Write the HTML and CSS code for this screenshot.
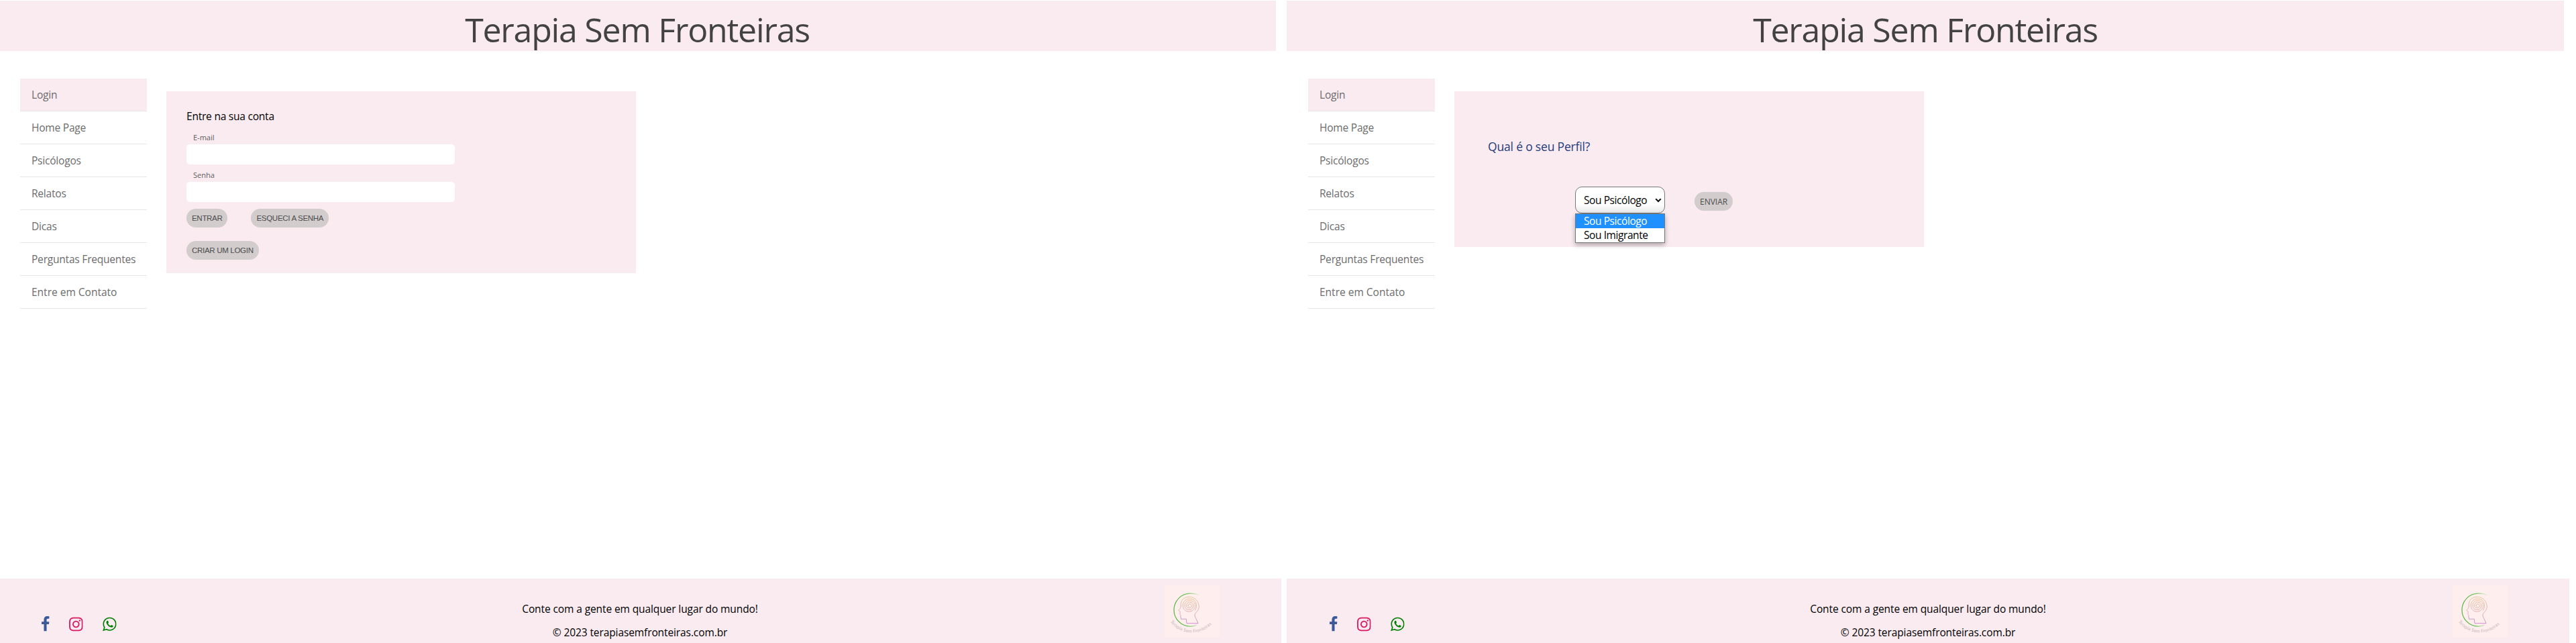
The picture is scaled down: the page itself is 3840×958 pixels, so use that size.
FILE: index.html
```html
<!DOCTYPE html>
<html lang="pt-BR">
<head>
<meta charset="utf-8">
<title>Terapia Sem Fronteiras</title>
<link rel="stylesheet" href="styles.css">
</head>
<body>
<svg class="defs" width="0" height="0" aria-hidden="true">
  <defs>
    <linearGradient id="ring" x1="0" y1="0" x2="1" y2="0">
      <stop offset="0" stop-color="#5cb848"/><stop offset=".6" stop-color="#7cc968"/><stop offset="1" stop-color="#9fd68c" stop-opacity=".1"/>
    </linearGradient>
    <linearGradient id="skin" x1="0" y1="17" x2="0" y2="57" gradientUnits="userSpaceOnUse">
      <stop offset="0" stop-color="#e2b36e"/><stop offset=".5" stop-color="#cf9f98"/><stop offset="1" stop-color="#b765c2"/>
    </linearGradient>
    <path id="curve" d="M8.500 54.500A40.400 40.400 0 0 0 73 54.500"/>
    <symbol id="fb" viewBox="479 0 864 1792"><path d="M1343 12v264h-157q-86 0-116 36t-30 108v189h293l-39 296h-254v759h-306v-759h-255v-296h255v-218q0-186 104-288.500t277-102.500q147 0 228 12z"/></symbol>
    <symbol id="ig" viewBox="128 0 1536 1792"><path d="M1152 896q0-106-75-181t-181-75-181 75-75 181 75 181 181 75 181-75 75-181zm138 0q0 164-115 279t-279 115-279-115-115-279 115-279 279-115 279 115 115 279zm108-410q0 38-27 65t-65 27-65-27-27-65 27-65 65-27 65 27 27 65zm-502-220q-7 0-76.5-.5t-105.5 0-96.5 3-103 10-71.5 18.5q-50 20-88 58t-58 88q-11 29-18.5 71.5t-10 103-3 96.5 0 105.5.5 76.5-.5 76.5 0 105.5 3 96.5 10 103 18.5 71.5q20 50 58 88t88 58q29 11 71.5 18.5t103 10 96.5 3 105.5 0 76.5-.5 76.5.5 105.5 0 96.5-3 103-10 71.5-18.5q50-20 88-58t58-88q11-29 18.5-71.5t10-103 3-96.5 0-105.5-.5-76.5.5-76.5 0-105.5-3-96.5-10-103-18.5-71.5q-20-50-58-88t-88-58q-29-11-71.5-18.5t-103-10-96.5-3-105.5 0-76.5.5zm768 630q0 229-5 317-10 208-124 322t-322 124q-88 5-317 5t-317-5q-208-10-322-124t-124-322q-5-88-5-317t5-317q10-208 124-322t322-124q88-5 317-5t317 5q208 10 322 124t124 322q5 88 5 317z"/></symbol>
    <symbol id="wa" viewBox="128 0 1536 1792"><path d="M1113 974q13 0 97.500 44t89.500 53q2 5 2 15 0 33-17 76-16 39-71 65.500t-102 26.500q-57 0-190-62-98-45-170-118t-148-185q-72-107-71-194v-8q3-91 74-158 24-22 52-22 6 0 18 1.500t19 1.500q19 0 26.500 6.500t15.500 27.500q8 20 33 88t25 75q0 21-34.500 57.500t-34.500 46.500q0 7 5 15 34 73 102 137 56 53 151 101 12 7 22 7 15 0 54-48.500t52-48.500zm-203 530q127 0 243.500-50t200.500-134 134-200.500 50-243.500-50-243.500-134-200.500-200.500-134-243.500-50-243.500 50-200.500 134-134 200.500-50 243.500q0 203 120 368l-79 233 242-77q158 103 345 103zm0-1382q153 0 292.500 60t240.500 161 161 240.500 60 292.500-60 292.500-161 240.500-240.500 161-292.500 60q-195 0-365-94l-417 134 136-405q-108-178-108-389 0-153 60-292.500t161-240.500 240.500-161 292.500-60z"/></symbol>
    <symbol id="logo" viewBox="0 0 82 78">
      <path d="M51.700 14.700C47 12.500 43 12.200 38.500 12.200A24.500 24.500 0 0 0 38.500 61.200C42 61.200 45 60.500 47.700 59.200" fill="none" stroke="url(#ring)" stroke-width="1.300"/>
      <g fill="none" stroke="url(#skin)" stroke-width=".7">
        <path d="M45 37.500C49.500 32.500 48.500 20.500 37.500 20.200C31.500 20 27.300 24.500 27.300 30C27.300 35.500 31.500 39.300 36.500 39.300C41.500 39.300 45.500 35 45.500 30C45.500 25.500 41.500 22.700 37.300 22.700C33 22.700 30 26 30 30C30 33.800 33 36.600 36.700 36.600C40.300 36.600 42.800 33.500 42.800 30.200C42.800 27.200 40.300 25.200 37.500 25.200C34.700 25.200 32.700 27.500 32.700 30C32.700 32.300 34.500 33.900 36.700 33.900C38.800 33.900 40.200 32.200 40.200 30.400C40.200 28.800 38.900 27.800 37.500 27.800C36.200 27.800 35.300 28.800 35.300 30C35.300 30.900 36 31.500 37 31.400"/>
        <path d="M24.300 31.500V28C24.500 21 30 17.300 36.500 17.300C45 17.300 51.300 24 51.300 32C51.300 38.500 45 40.500 45 44.500C45 48 48 51 50 56.700H33L32.300 50.300H24.700L23.700 46.500L24 44.500L22.700 42.500L23.400 39.500L20.700 37.500C22.500 35.500 24.300 34 24.300 31"/>
      </g>
    </symbol>
  </defs>
</svg>

<div class="page">
  <header class="banner"><h1>Terapia Sem Fronteiras</h1></header>
  <main class="content">
    <nav class="menu">
      <a class="active">Login</a><a>Home Page</a><a>Psicólogos</a><a>Relatos</a><a>Dicas</a><a>Perguntas Frequentes</a><a>Entre em Contato</a>
    </nav>
    <form class="card login">
      <h2>Entre na sua conta</h2>
      <label>E-mail</label><input type="text">
      <label>Senha</label><input type="password">
      <div class="actions">
        <button type="button">ENTRAR</button><button type="button">ESQUECI A SENHA</button>
      </div>
      <button type="button">CRIAR UM LOGIN</button>
    </form>
  </main>
  <footer class="footer">
    <div class="social">
      <svg class="fb"><use href="#fb"/></svg><svg class="ig"><use href="#ig"/></svg><svg class="wa"><use href="#wa"/></svg>
    </div>
    <div class="legal"><p>Conte com a gente em qualquer lugar do mundo!</p><p>© 2023 terapiasemfronteiras.com.br</p></div>
    <svg class="logo" viewBox="0 0 82 78">
      <use href="#logo" width="82" height="78"/>
      <text class="motto"><textPath href="#curve">Terapia Sem Fronteiras</textPath></text>
    </svg>
  </footer>
</div>

<div class="page">
  <header class="banner"><h1>Terapia Sem Fronteiras</h1></header>
  <main class="content">
    <nav class="menu">
      <a class="active">Login</a><a>Home Page</a><a>Psicólogos</a><a>Relatos</a><a>Dicas</a><a>Perguntas Frequentes</a><a>Entre em Contato</a>
    </nav>
    <form class="card profile">
      <h2>Qual é o seu Perfil?</h2>
      <div class="choice">
        <div class="select">
          <span>Sou Psicólogo</span>
          <svg class="chevron" viewBox="0 0 10 7"><path d="M1.200 1.200L5 5L8.800 1.200"/></svg>
          <ul class="options"><li class="selected">Sou Psicólogo</li><li>Sou Imigrante</li></ul>
        </div>
        <button type="button" class="send">ENVIAR</button>
      </div>
    </form>
  </main>
  <footer class="footer">
    <div class="social">
      <svg class="fb"><use href="#fb"/></svg><svg class="ig"><use href="#ig"/></svg><svg class="wa"><use href="#wa"/></svg>
    </div>
    <div class="legal"><p>Conte com a gente em qualquer lugar do mundo!</p><p>© 2023 terapiasemfronteiras.com.br</p></div>
    <svg class="logo" viewBox="0 0 82 78">
      <use href="#logo" width="82" height="78"/>
      <text class="motto"><textPath href="#curve">Terapia Sem Fronteiras</textPath></text>
    </svg>
  </footer>
</div>
</body>
</html>
```
FILE: styles.css
```css
* { box-sizing: border-box; }
body {
  margin: 0;
  display: grid;
  grid-template-columns: 1920px 1920px;
  height: 958px;
  overflow: hidden;
  background: #fff;
  font-family: "Open Sans", "Noto Sans", sans-serif;
  font-size: 15.5px;
  color: #000;
}
.defs { position: absolute; }
h1, h2, p, ul { margin: 0; padding: 0; font-weight: 400; }

.page {
  display: flex;
  flex-direction: column;
  height: 958px;
  padding-top: 1px;
}
.banner {
  width: 1904px;
  height: 75px;
  margin-left: -2px;
  padding-top: 10px;
  background: #faebf0;
  text-align: center;
}
.banner h1 {
  font-size: 50px;
  line-height: 66px;
  letter-spacing: -1.2px;
  color: #424242;
}

.content {
  flex: 1;
  display: flex;
  align-items: flex-start;
  gap: 29px;
  padding: 41px 0 0 30px;
}
.menu { width: 189px; }
.menu a {
  display: block;
  height: 49px;
  padding-left: 17px;
  border-bottom: 1px solid #e6e6e6;
  line-height: 48px;
  letter-spacing: -0.2px;
  color: #6c6c6c;
}
.menu a:last-child { letter-spacing: 0; }
.menu .active { background: #faebf0; }

.card {
  width: 700px;
  margin-top: 19px;
  background: #faebf0;
}
.login { height: 271px; padding: 26px 30px 0; }
.login h2 {
  font-size: 15.5px;
  line-height: 22px;
  letter-spacing: -0.22px;
  margin-bottom: 13px;
}
.login label {
  display: block;
  padding-left: 10px;
  font-size: 11px;
  line-height: 16px;
  color: #5c5c60;
}
.login input {
  display: block;
  width: 400px;
  height: 30px;
  margin: 2px 0 8px;
  padding: 0 10px;
  border: 0;
  border-radius: 5px;
  background: #fff;
}
.actions { display: flex; gap: 35px; margin: 10px 0 20px; }
button {
  height: 28px;
  padding: 0 8px;
  border: 0;
  border-radius: 14px;
  background: #d2cccc;
  font: 11.5px "Liberation Sans", Arial, sans-serif;
  letter-spacing: -0.3px;
  color: #4c4c4c;
}

.profile { height: 232px; padding: 70px 50px 0; }
.profile h2 {
  font-size: 17.5px;
  line-height: 24px;
  letter-spacing: -0.18px;
  color: #1f3c7c;
}
.choice {
  display: flex;
  align-items: flex-start;
  gap: 44px;
  padding: 48px 0 0 130px;
}
.select {
  position: relative;
  display: flex;
  align-items: center;
  justify-content: space-between;
  width: 134px;
  height: 40px;
  padding: 0 4px 0 12px;
  border: 1px solid #767676;
  border-radius: 10px;
  background: linear-gradient(#fff 65%, #e9e9e9);
  letter-spacing: -0.42px;
}
.chevron {
  width: 10px;
  height: 7px;
  fill: none;
  stroke: #111;
  stroke-width: 2;
}
.options {
  position: absolute;
  top: 39px;
  left: -1px;
  width: 134px;
  border: 1px solid #767676;
  background: #fff;
  box-shadow: 0 3px 7px rgba(0, 0, 0, .3);
  list-style: none;
}
.options li { height: 21px; padding-left: 12px; line-height: 21px; }
.options .selected { background: #1e90ff; color: #fff; }
.send {
  margin-top: 8px;
  width: 57px;
  font: 12px "Open Sans", sans-serif;
  letter-spacing: 0;
}

.footer {
  display: grid;
  grid-template-columns: 1fr auto 1fr;
  width: 1912px;
  height: 96px;
  margin-left: -2px;
  background: #faebf0;
}
.social {
  display: flex;
  align-items: flex-start;
  gap: 29.5px;
  padding: 56.4px 0 0 64px;
}
.social svg { width: 20.6px; height: 24px; }
.social .fb { width: 11.6px; fill: #3b5998; }
.social .ig { fill: #d81b60; }
.social .wa { fill: #008000; }
.legal {
  padding-top: 28px;
  text-align: center;
  line-height: 35px;
  letter-spacing: -0.1px;
}
.logo {
  width: 82px;
  height: 78px;
  margin: 10px 92px 0 0;
  justify-self: end;
  background: #feeeed;
}
.motto {
  font-family: Lato, sans-serif;
  font-size: 6.6px;
  letter-spacing: .2px;
  fill: #c4b8bd;
}
```
